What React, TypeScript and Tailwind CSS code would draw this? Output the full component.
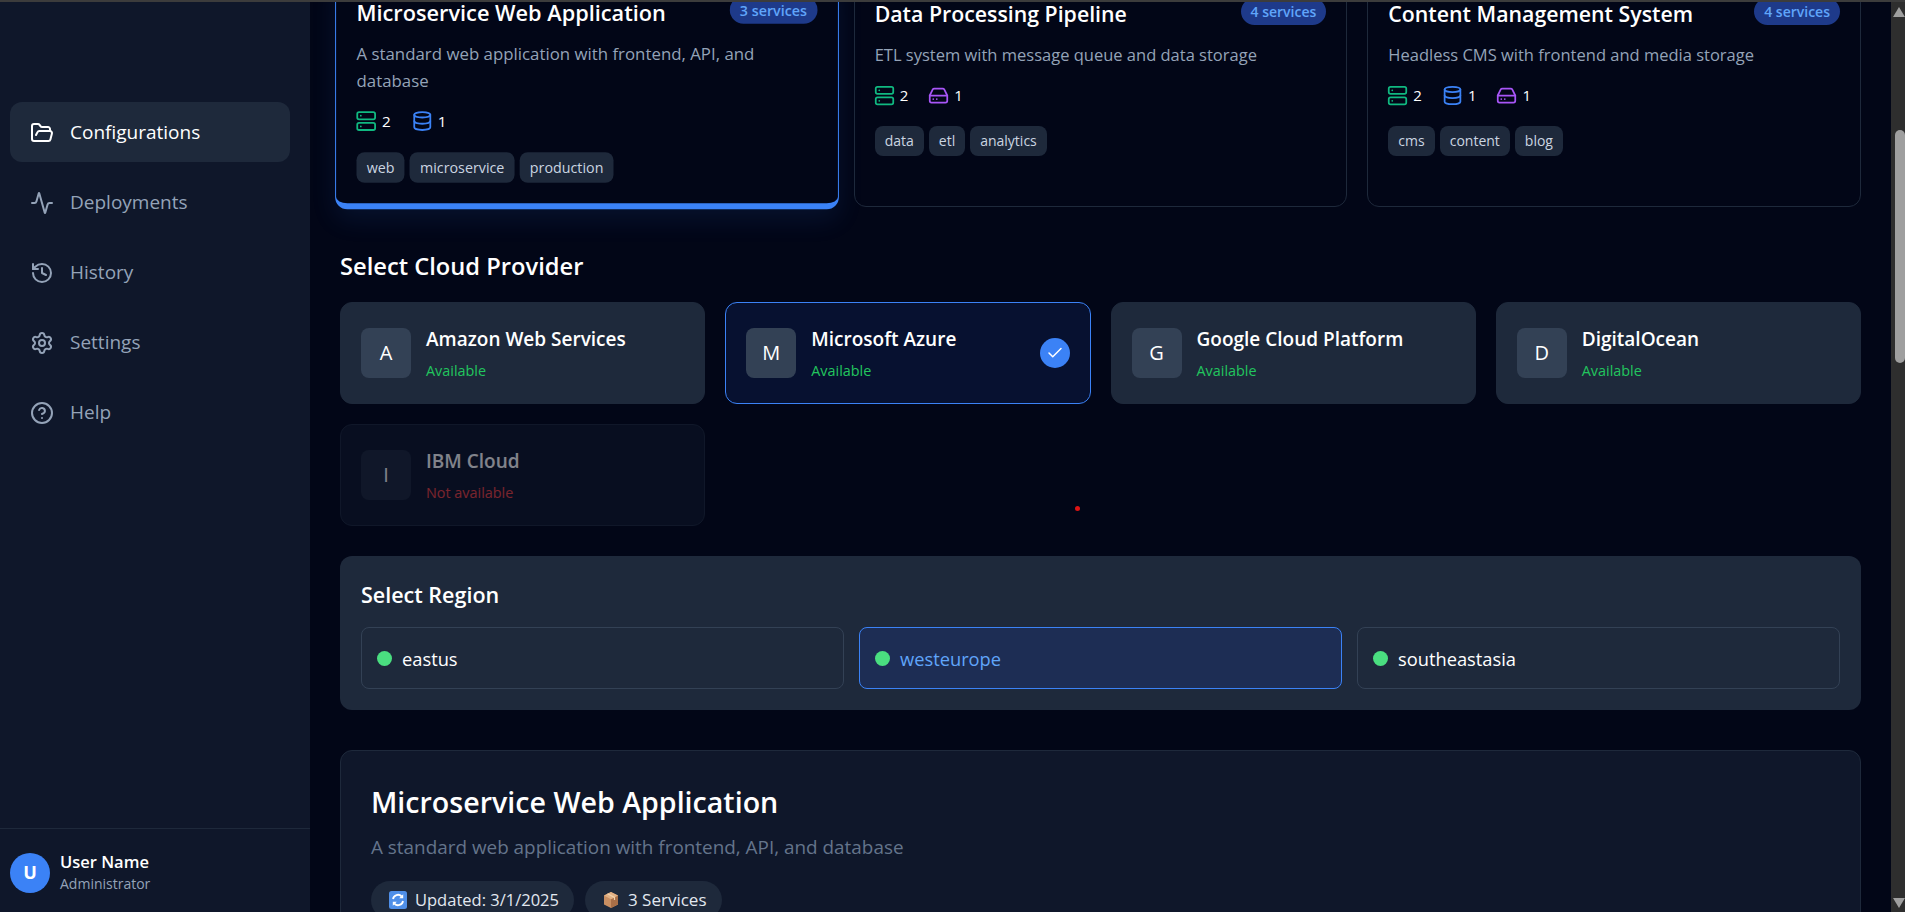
import { Activity, Check, CircleHelp, Database, FolderOpen, HardDrive, History, Server, Settings } from "lucide-react";
import type { ReactNode } from "react";

const navItems = [
  { label: "Configurations", icon: FolderOpen, active: true },
  { label: "Deployments", icon: Activity },
  { label: "History", icon: History },
  { label: "Settings", icon: Settings },
  { label: "Help", icon: CircleHelp },
];

const templates = [
  {
    title: "Microservice Web Application",
    desc: "A standard web application with frontend, API, and database",
    services: 3,
    counts: { server: 2, db: 1, disk: 0 },
    tags: ["web", "microservice", "production"],
    selected: true,
  },
  {
    title: "Data Processing Pipeline",
    desc: "ETL system with message queue and data storage",
    services: 4,
    counts: { server: 2, db: 0, disk: 1 },
    tags: ["data", "etl", "analytics"],
  },
  {
    title: "Content Management System",
    desc: "Headless CMS with frontend and media storage",
    services: 4,
    counts: { server: 2, db: 1, disk: 1 },
    tags: ["cms", "content", "blog"],
  },
];

const providers = [
  { name: "Amazon Web Services", letter: "A" },
  { name: "Microsoft Azure", letter: "M", selected: true },
  { name: "Google Cloud Platform", letter: "G" },
  { name: "DigitalOcean", letter: "D" },
  { name: "IBM Cloud", letter: "I", disabled: true },
];

const regions = [
  { name: "eastus" },
  { name: "westeurope", selected: true },
  { name: "southeastasia" },
];

function Count({ icon, value }: { icon: ReactNode; value: number }) {
  return (
    <span className="flex items-center gap-[5px] text-[15px] leading-[21px] text-white">
      {icon}
      {value}
    </span>
  );
}

function RefreshEmoji() {
  return (
    <svg width="18" height="18" viewBox="0 0 18 18" className="shrink-0">
      <rect width="18" height="18" rx="2.5" fill="#4f8fe8" />
      <path d="M4 8a5 5 0 0 1 8.6-2.6" fill="none" stroke="#fff" strokeWidth="1.8" />
      <path d="M14 10a5 5 0 0 1-8.6 2.6" fill="none" stroke="#fff" strokeWidth="1.8" />
      <path d="M14.2 3.2v4h-4zM3.8 14.8v-4h4z" fill="#fff" />
    </svg>
  );
}

function BoxEmoji() {
  return (
    <svg width="16" height="18" viewBox="0 0 16 18" className="shrink-0">
      <path d="M8 1l7 3.5v9L8 17l-7-3.500v-9z" fill="#c98f62" />
      <path d="M8 8.200L15 4.500v9L8 17z" fill="#a96f47" />
      <path d="M1 4.500L8 1l7 3.500-7 3.700z" fill="#e2b184" />
      <path d="M4.500 2.800l7 3.600v2.500" fill="none" stroke="#f0d2ad" strokeWidth="1.200" />
    </svg>
  );
}

export default function App() {
  return (
    <div className="flex h-screen flex-col overflow-hidden bg-[#020617] font-['Open_Sans',sans-serif]">
      <div className="h-[2px] shrink-0 bg-[#3c3c3c]" />
      <div className="flex min-h-0 flex-1">
        {/* sidebar */}
        <aside className="flex w-[310px] shrink-0 flex-col bg-[#0f172a]">
          <nav className="flex flex-col gap-[10px] pt-[100px] pr-[20px] pl-[10px]">
            {navItems.map((item) => (
              <div
                key={item.label}
                className={`flex h-[60px] items-center gap-[16px] rounded-[12px] pt-[1px] pl-[20px] text-[19px] ${
                  item.active ? "bg-[#1e293b] text-white" : "text-[#94a3b8]"
                }`}
              >
                <item.icon size={24} strokeWidth={2} />
                {item.label}
              </div>
            ))}
          </nav>
          <div className="mt-auto flex h-[84px] items-center gap-[10px] border-t border-[#1e293b] px-[10px] pt-[4px]">
            <div className="flex h-[40px] w-[40px] items-center justify-center rounded-full bg-[#3b82f6] text-[18px] font-bold text-white">
              U
            </div>
            <div>
              <div className="text-[16.500px] leading-[22px] font-semibold text-white">User Name</div>
              <div className="text-[14px] leading-[21px] text-[#94a3b8]">Administrator</div>
            </div>
          </div>
        </aside>

        {/* main */}
        <main className="relative min-w-0 flex-1 overflow-hidden px-[30px]">
          <div className="-mt-[26px]">
            <div className="grid grid-cols-3 gap-[20px]">
              {templates.map((t) => (
                <div
                  key={t.title}
                  className={`rounded-[12px] border bg-[#020617] px-[20px] pt-[20px] ${
                    t.selected
                      ? "scale-[1.02] border-[#3b82f6] border-b-[6px] pb-[20px] shadow-[0_10px_25px_rgba(59,130,246,0.1)]"
                      : "border-[#1e293b] pb-[20px]"
                  }`}
                >
                  <div className="mb-[12px] flex items-start justify-between">
                    <h3 className="text-[21.300px] leading-[33px] font-semibold whitespace-nowrap text-white">{t.title}</h3>
                    <span className="mt-[1px] rounded-full bg-[#1e3a8a] px-[10px] text-[14px] leading-[27px] font-semibold text-[#60a5fa]">
                      {t.services} services
                    </span>
                  </div>
                  <p className="mb-[17px] text-[16.500px] leading-[25.500px] text-[#94a3b8]">{t.desc}</p>
                  <div className="mb-[20px] -ml-[1px] flex gap-[20px]">
                    {t.counts.server > 0 && <Count icon={<Server size={21} className="text-[#10b981]" />} value={t.counts.server} />}
                    {t.counts.db > 0 && <Count icon={<Database size={21} className="text-[#3b82f6]" />} value={t.counts.db} />}
                    {t.counts.disk > 0 && <Count icon={<HardDrive size={21} className="text-[#a855f7]" />} value={t.counts.disk} />}
                  </div>
                  <div className="flex gap-[5px]">
                    {t.tags.map((tag) => (
                      <span key={tag} className="rounded-[8px] bg-[#1e293b] px-[10px] text-[14px] leading-[30px] text-[#cbd5e1]">
                        {tag}
                      </span>
                    ))}
                  </div>
                </div>
              ))}
            </div>

            <h2 className="mt-[41px] mb-[18px] text-[23.700px] leading-[36px] font-semibold text-white">Select Cloud Provider</h2>
            <div className="grid grid-cols-4 gap-[20px]">
              {providers.map((p) => (
                <div
                  key={p.name}
                  className={`flex h-[102px] items-center rounded-[12px] border px-[20px] ${
                    p.selected
                      ? "border-[#3b82f6] bg-[#071130]"
                      : p.disabled
                        ? "border-[#1e293b] bg-[#0f172a] opacity-50"
                        : "border-[#1e293b] bg-[#1e293b]"
                  }`}
                >
                  <div className={`flex h-[50px] w-[50px] shrink-0 items-center justify-center rounded-[8px] text-[20px] text-white ${p.disabled ? "bg-[#1e293b]" : "bg-[#334155]"}`}>
                    {p.letter}
                  </div>
                  <div className="ml-[15px]">
                    <div className="mb-[7px] text-[19px] leading-[27px] font-semibold text-white">{p.name}</div>
                    <div className={`text-[14.400px] leading-[21px] ${p.disabled ? "text-[#ef4444]" : "text-[#22c55e]"}`}>
                      {p.disabled ? "Not available" : "Available"}
                    </div>
                  </div>
                  {p.selected && (
                    <div className="ml-auto flex h-[30px] w-[30px] items-center justify-center rounded-full bg-[#3b82f6]">
                      <Check size={18} className="text-white" />
                    </div>
                  )}
                </div>
              ))}
            </div>

            <section className="mt-[30px] rounded-[12px] bg-[#1e293b] px-[21px] pt-[24px] pb-[21px]">
              <h3 className="mb-[17px] text-[21.500px] leading-[30px] font-semibold text-white">Select Region</h3>
              <div className="grid grid-cols-3 gap-[15px]">
                {regions.map((r) => (
                  <div
                    key={r.name}
                    className={`flex h-[62px] items-center gap-[10px] rounded-[8px] border px-[15px] text-[18.300px] ${
                      r.selected ? "border-[#3b82f6] bg-[#1d2d54] text-[#60a5fa]" : "border-[#334155] text-white"
                    }`}
                  >
                    <span className="h-[15px] w-[15px] rounded-full bg-[#4ade80]" />
                    <span className="pt-[1px]">{r.name}</span>
                  </div>
                ))}
              </div>
            </section>

            <section className="mt-[40px] rounded-[12px] border border-[#1e293b] bg-[#0f172a] px-[30px] pt-[29px] pb-[30px]">
              <h2 className="mb-[11px] text-[28.600px] leading-[43px] font-semibold text-white">Microservice Web Application</h2>
              <p className="mb-[20px] text-[18.900px] leading-[27px] text-[#64748b]">A standard web application with frontend, API, and database</p>
              <div className="flex gap-[11px]">
                <span className="flex h-[38px] items-center gap-[8px] rounded-full bg-[#1e293b] pr-[15px] pl-[18px] text-[16.500px] text-[#e2e8f0]">
                  <RefreshEmoji />
                  Updated: 3/1/2025
                </span>
                <span className="flex h-[38px] items-center gap-[9px] rounded-full bg-[#1e293b] pr-[15px] pl-[18px] text-[17px] text-[#e2e8f0]">
                  <BoxEmoji />3 Services
                </span>
              </div>
            </section>
          </div>
          {/* stray red dot sitting over the page */}
          <span className="absolute top-[504px] left-[765px] h-[5px] w-[5px] rounded-full bg-[#dc1414]" />
        </main>

        {/* windows style scrollbar */}
        <div className="flex w-[14px] shrink-0 flex-col items-end bg-[#2e2e2e]">
          <svg width="12" height="10" viewBox="0 0 12 10" className="mt-[5px] shrink-0">
            <path d="M6 0l6 10H0z" fill="#9f9f9f" />
          </svg>
          <div className="mt-[113px] h-[233px] w-[10px] rounded-[5px] bg-[#9f9f9f]" />
          <svg width="12" height="10" viewBox="0 0 12 10" className="mt-auto mb-[4px] shrink-0">
            <path d="M6 10L12 0H0z" fill="#9f9f9f" />
          </svg>
        </div>
      </div>
    </div>
  );
}
